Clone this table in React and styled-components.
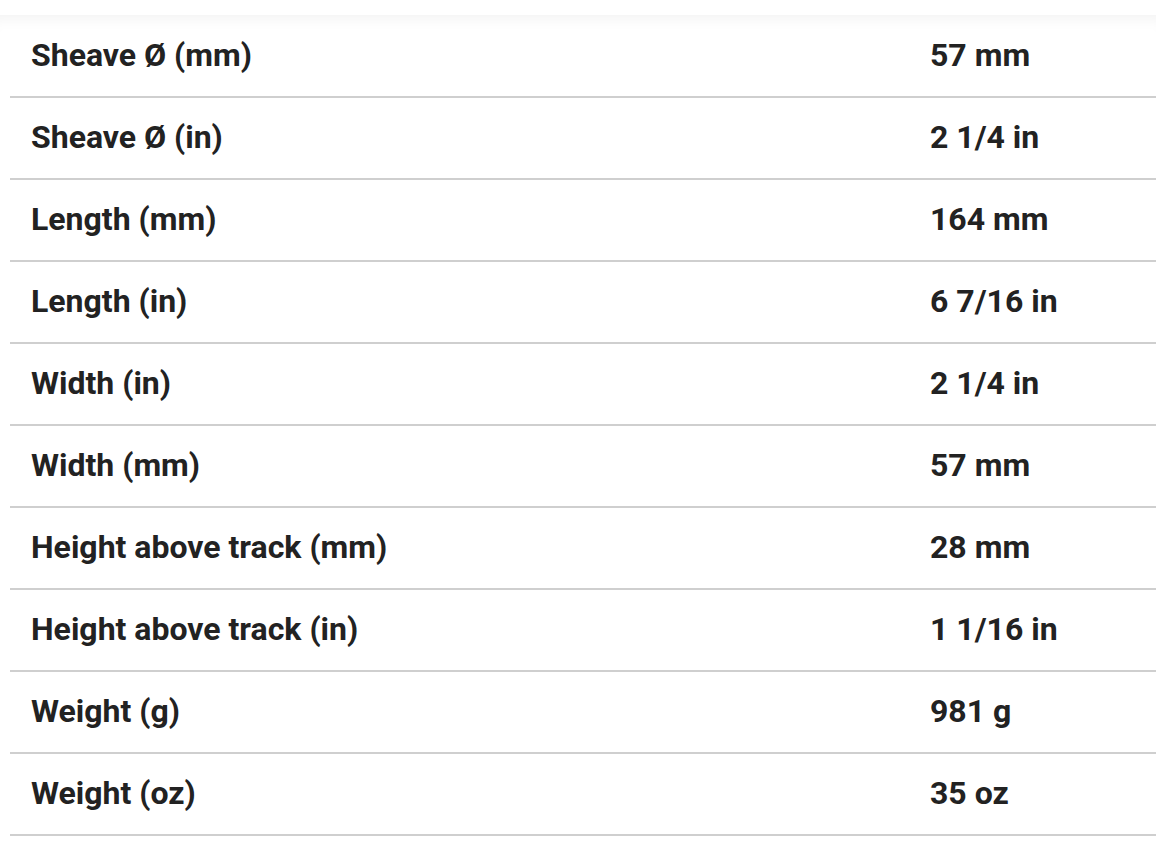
import React from "react";
import styled, { createGlobalStyle } from "styled-components";

const GlobalStyle = createGlobalStyle`
  body {
    margin: 0;
    background: #fff;
    font-family: Roboto, "Liberation Sans", sans-serif;
  }
`;

const specs = [
  ["Sheave Ø (mm)", "57 mm"],
  ["Sheave Ø (in)", "2 1/4 in"],
  ["Length (mm)", "164 mm"],
  ["Length (in)", "6 7/16 in"],
  ["Width (in)", "2 1/4 in"],
  ["Width (mm)", "57 mm"],
  ["Height above track (mm)", "28 mm"],
  ["Height above track (in)", "1 1/16 in"],
  ["Weight (g)", "981 g"],
  ["Weight (oz)", "35 oz"],
];

const App = () => {
  return (
    <>
      <GlobalStyle />
      <Wrapper>
        <Table>
          <tbody>
            {specs.map(([label, value]) => (
              <Row key={label}>
                <Cell $label>{label}</Cell>
                <Cell>{value}</Cell>
              </Row>
            ))}
          </tbody>
        </Table>
      </Wrapper>
    </>
  );
};

const Wrapper = styled.div`
  margin-top: 15px;
  padding-left: 10px;
  box-shadow: inset 0 14px 14px -10px rgba(0, 0, 0, 0.05);
`;

const Table = styled.table`
  width: 100%;
  border-collapse: collapse;
`;

const Row = styled.tr`
  height: 82px;
  border-bottom: 2px solid #cfcfcf;
`;

const Cell = styled.td`
  box-sizing: border-box;
  padding: 0 0 2px 21px;
  width: ${(p) => (p.$label ? "899px" : "auto")};
  font-size: 32px;
  font-weight: 700;
  color: #222;
  vertical-align: middle;
  white-space: nowrap;
`;

export default App;
